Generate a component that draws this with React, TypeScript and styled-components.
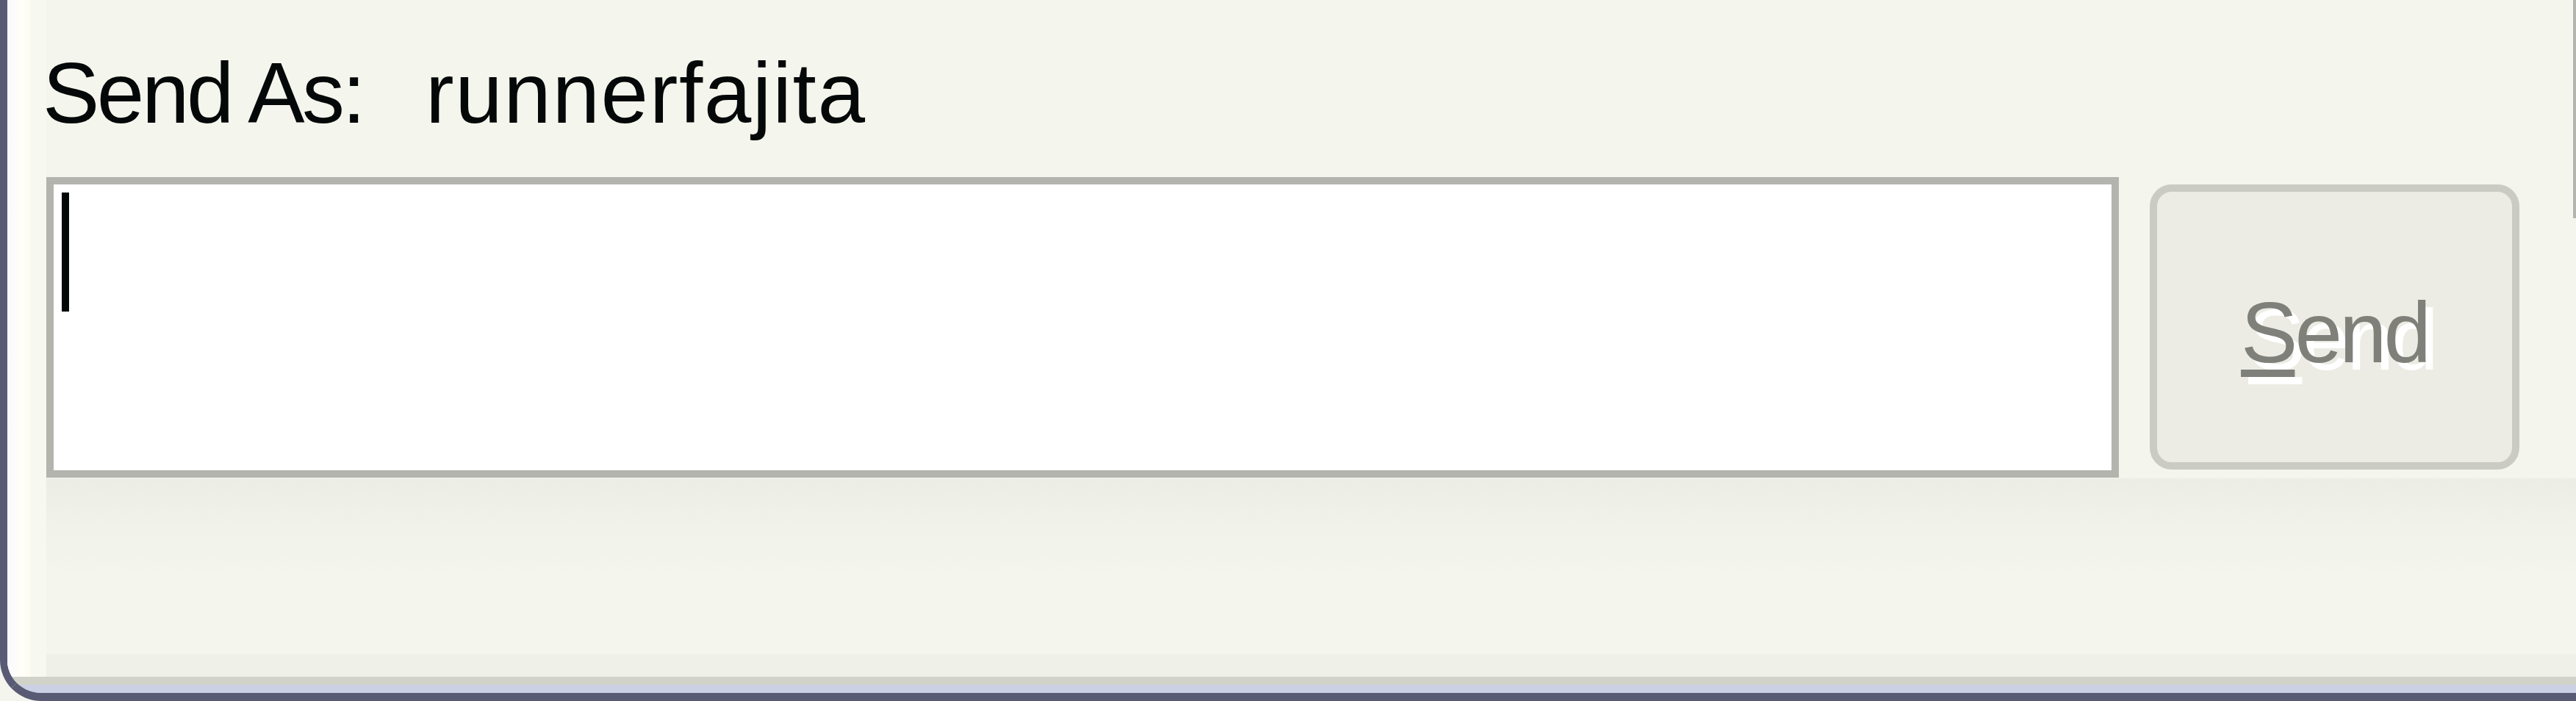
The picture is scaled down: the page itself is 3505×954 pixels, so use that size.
import React from "react";
import styled, { createGlobalStyle } from "styled-components";

const GlobalStyle = createGlobalStyle`
  html, body {
    margin: 0;
    padding: 0;
    background: #f4f5ed;
    overflow: hidden;
  }
  body {
    font-family: "Liberation Sans", Arial, sans-serif;
  }
`;

// outer window frame: dark edge on the left and bottom, rounded corner
const Frame = styled.div`
  width: 3505px;
  height: 954px;
  box-sizing: border-box;
  border-left: 10px solid #595b76;
  border-bottom: 11px solid #595b74;
  border-bottom-left-radius: 56px;
  overflow: hidden;
  display: flex;
  flex-direction: column;
  background: #ccd0e4;
`;

const Panel = styled.div`
  flex: 1;
  display: flex;
  flex-direction: column;
  border-bottom: 11px solid #ccd0e4;
`;

const Surface = styled.div`
  flex: 1;
  border-bottom: 11px solid #d1d2c9;
  padding: 69px 0 0 48px;
  background:
    linear-gradient(#b4b4b0, #b4b4b0) right top / 4px 297px no-repeat,
    linear-gradient(
        to right,
        #f9faff 0,
        #fffef8 18px,
        #fdfcf3 32px,
        #f7f8f0 32px,
        #f7f8f0 53px,
        transparent 53px
      )
      left top / 53px 100% no-repeat,
    linear-gradient(#eff0e7, #eff0e7) left bottom / 100% 31px no-repeat,
    linear-gradient(#f4f5ed 0, #f4f5ed 650px, #eceee5 652px, #f1f2ea 720px, #f4f6ee 790px),
    #f4f5ed;
`;

const SenderLine = styled.div`
  display: flex;
  align-items: baseline;
  height: 116px;
  font-size: 116px;
  line-height: 116px;
  color: #050808;
`;

const Text = styled.span<{ $tracking: number; $width?: number }>`
  display: inline-block;
  letter-spacing: ${(p) => p.$tracking}px;
  white-space: nowrap;
  ${(p) => (p.$width ? `width: ${p.$width}px;` : "")}
`;

const ComposeRow = styled.div`
  display: flex;
  align-items: flex-start;
  gap: 42px;
  margin-top: 56px;
  margin-left: 5px;
`;

const MessageField = styled.div`
  width: 2820px;
  height: 409px;
  box-sizing: border-box;
  border: 10px solid #b3b4ae;
  background: #ffffff;
  padding: 11px 0 0 11px;
`;

const Caret = styled.span`
  display: block;
  width: 10px;
  height: 162px;
  background: #030707;
`;

const SendButton = styled.button`
  width: 503px;
  height: 388px;
  margin-top: 10px;
  box-sizing: border-box;
  border: 10px solid #cacbc2;
  border-radius: 30px;
  background: #ecece4;
  display: flex;
  align-items: center;
  justify-content: center;
  padding: 16px 0 0 0;
  font-family: "Liberation Sans", Arial, sans-serif;
  font-size: 116px;
  line-height: 116px;
  letter-spacing: -4px;
  color: #7f807a;
  text-shadow: 10px 10px 0 #ffffff;
  cursor: default;

  u {
    text-decoration-thickness: 10px;
    text-underline-offset: 10px;
  }
`;

export default function App() {
  return (
    <>
      <GlobalStyle />
      <Frame>
        <Panel>
          <Surface>
            <SenderLine>
              <Text $tracking={-3.5} $width={521}>
                Send As:
              </Text>
              <Text $tracking={1.6}>runnerfajita</Text>
            </SenderLine>
            <ComposeRow>
              <MessageField>
                <Caret />
              </MessageField>
              <SendButton disabled>
                <span>
                  <u>S</u>end
                </span>
              </SendButton>
            </ComposeRow>
          </Surface>
        </Panel>
      </Frame>
    </>
  );
}
